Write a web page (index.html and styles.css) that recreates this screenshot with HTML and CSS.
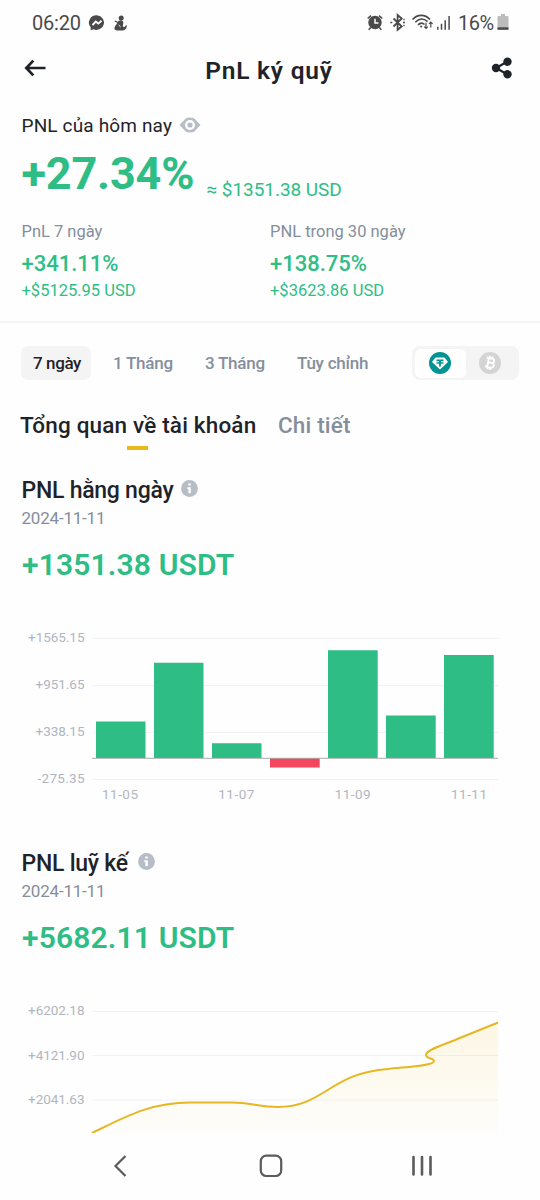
FILE: index.html
```html
<!DOCTYPE html>
<html lang="vi">
<head>
<meta charset="utf-8">
<title>PnL ký quỹ</title>
<link rel="stylesheet" href="styles.css">
</head>
<body>
<div class="status">
  <span class="clock">06:20</span>
  <svg class="st-left" width="40" height="20" viewBox="0 0 40 20">
    <path d="M8.700 2.300a7.600 7.300 0 1 1-3.300 14l-2.800.9.100-2.900a7.600 7.300 0 0 1 6-12z" fill="#4a4a4a"/>
    <path d="M4.500 12.200 7.700 8.600l2.600 2L13.500 7.800" fill="none" stroke="#fff" stroke-width="1.900"/>
    <circle cx="33.200" cy="4.900" r="2.500" fill="#4a4a4a"/>
    <path d="M30 8.500c2-2 5-1.500 5.300.8.200 2-.8 2.900-.2 4.200.600 1 2.100.5 2.500-1l1.200-.3c.2 3.700-2 5.200-4.800 5.200h-4.600c-3 0-3.800-1.800-2.200-3.900z" fill="#4a4a4a"/>
    <path d="m26.800 8 3.200 1.500M27 13.500h4.500" stroke="#4a4a4a" stroke-width="1.300"/>
    <path d="m30.700 12 1.900 1.900" stroke="#fff" stroke-width="1"/>
  </svg>
  <svg class="st-right" width="90" height="20" viewBox="0 0 90 20" fill="none" stroke="#4a4a4a">
    <circle cx="9" cy="9.500" r="6.700" fill="#4a4a4a" stroke="none"/>
    <path d="M1.700 5.500 5 2.700M16.300 5.500 13 2.700M4.700 14.500l-2 2.200M13.300 14.500l2 2.200" stroke-width="1.600"/>
    <path d="M9 5.800v4.200h3.500" stroke="#fff" stroke-width="1.500"/>
    <path d="m27.500 5.500 8.200 8-4.100 3.300V2l4.100 3.500-8.200 8" stroke-width="1.800"/>
    <path d="M24.300 9.500h2M37 9.500h2M37.500 6.800l1-.6M37.500 12.200l1 .6" stroke-width="1.500"/>
    <path d="M46.500 6.500c5-5.500 12.500-5.500 17.500 0M49.300 9.200c4-4 8.500-4 12.300-.5M52 11.900c2.200-2.200 4.600-2.200 6.500-.4" stroke-width="1.600"/>
    <circle cx="55.200" cy="13.500" r="1.100" fill="#4a4a4a" stroke="none"/>
    <path d="M60 9.800v5.500m-1.800-1.600 1.800 1.800 1.800-1.800M64.800 14.500V9.200M63 10.900l1.800-1.800 1.800 1.800" stroke-width="1.200"/>
    <path d="M71.800 13.800v3M75.500 10.800v6M79.200 7.300v9.500M83.100 3v13.800" stroke-width="1.500"/>
  </svg>
  <span class="battery-text">16%</span>
  <svg class="battery" width="12" height="18" viewBox="0 0 12 18">
    <path d="M4 1h4v2h2.500q1 0 1 1v12.500H.5V4q0-1 1-1H4z" fill="#bcbcbc"/>
    <path d="M.5 14.300h11v2.500H.5z" fill="#4a4a4a"/>
  </svg>
</div>

<header class="header">
  <svg class="back" width="24" height="20" viewBox="0 0 24 20" fill="none" stroke="#1e2329" stroke-width="2.700"><path d="M22.500 10H4M10.300 2.600 3.300 10l7 7.400"/></svg>
  <h1>PnL ký quỹ</h1>
  <svg class="share" width="22" height="22" viewBox="0 0 22 22" fill="#1e2329"><path d="M16.500 4.500 5 11l11.500 6.500" fill="none" stroke="#1e2329" stroke-width="2.200"/><circle cx="5" cy="11" r="4.200"/><circle cx="16.500" cy="4.700" r="4.200"/><circle cx="16.500" cy="17.300" r="4.200"/></svg>
</header>

<section class="summary">
  <div class="today">
    <span class="today-label">PNL của hôm nay</span>
    <svg class="eye" width="22" height="16" viewBox="0 0 22 16"><path d="M.5 8 6.500 1.700Q8 .4 11 .4T15.500 1.700L21.500 8l-6 6.300Q14 15.600 11 15.600T6.500 14.300z" fill="#b7bdc6"/><circle cx="11" cy="8" r="5" fill="#fff"/><circle cx="11" cy="8" r="2.600" fill="#b7bdc6"/></svg>
  </div>
  <div class="main-value"><span class="percent">+27.34%</span><span class="approx">≈ $1351.38 USD</span></div>
  <div class="stats">
    <div><div class="stat-label l7">PnL 7 ngày</div><div class="stat-value">+341.11%</div><div class="stat-usd">+$5125.95 USD</div></div>
    <div><div class="stat-label l30">PNL trong 30 ngày</div><div class="stat-value">+138.75%</div><div class="stat-usd">+$3623.86 USD</div></div>
  </div>
</section>

<nav class="ranges">
  <span class="range active">7 ngày</span>
  <span class="range r1">1 Tháng</span>
  <span class="range r3">3 Tháng</span>
  <span class="range custom">Tùy chỉnh</span>
  <div class="coins">
    <span class="coin on"><svg width="22" height="22" viewBox="0 0 22 22"><circle cx="11" cy="11" r="11" fill="#009393"/><path d="M6.500 5.500h9L19 10l-8 7.500L3 10z" fill="#fff"/><path d="M7.500 7.500h7v1.700h-2.600v1c2 .1 3.300.4 3.300.8s-1.300.8-3.300.8v2.600h-1.800v-2.600c-2-.1-3.300-.4-3.300-.8s1.300-.7 3.300-.8v-1H7.500z" fill="#009393"/></svg></span>
    <span class="coin"><svg width="22" height="22" viewBox="0 0 22 22"><circle cx="11" cy="11" r="11" fill="#d4d4d4"/><g transform="rotate(12 11 11)" fill="none" stroke="#fff" stroke-width="1.900"><path d="M6.800 6.300h5.400c3.200 0 3.200 4.300 0 4.300H8.900h3.700c3.500 0 3.500 4.800 0 4.800H6.800M9 6.300v9.100M9.800 4v2.300M12.400 4v2.300M9.800 15.400v2.300M12.400 15.400v2.300"/></g></svg></span>
  </div>
</nav>

<nav class="tabs"><span class="tab selected">Tổng quan về tài khoản</span><span class="tab detail">Chi tiết</span></nav>

<section class="panel">
  <div class="panel-title"><h2 class="daily">PNL hằng ngày</h2><svg width="17" height="17" viewBox="0 0 17 17"><circle cx="8.500" cy="8.500" r="8.400" fill="#b7bdc6"/><path d="M7.200 3.400h2.600v2.200H7.200zM6.300 7.200h3.500v6H7.400V9H6.300z" fill="#fff"/></svg></div>
  <div class="date">2024-11-11</div>
  <div class="amount">+1351.38 USDT</div>
  <svg class="chart" width="540" height="190" viewBox="0 620 540 190">
    <path class="grid" d="M92 638.500h406M92 685.500h406M92 732.500h406M92 779.500h406"/>
    <g fill="#2ebd85"><path d="M96 721.400h49.500V758H96zM154 662.700h49.500V758H154zM212 743.300h49.500V758H212zM328 650.300h49.700V758H328zM386 715.500h49.700V758H386zM444 655h49.700V758H444z"/></g>
    <path d="M270 758h49.700v9.500H270z" fill="#f6465d"/>
    <path d="M92 758.300h406" stroke="#a9aaab"/>
    <g class="axis end"><text x="84.500" y="642.300" textLength="56.500">+1565.15</text><text x="84.500" y="689.300" textLength="49">+951.65</text><text x="84.500" y="736.300" textLength="49">+338.15</text><text x="84.500" y="783.300" textLength="47">-275.35</text></g>
    <g class="axis mid"><text x="120" y="799" textLength="36">11-05</text><text x="236.300" y="799" textLength="36">11-07</text><text x="352.700" y="799" textLength="36">11-09</text><text x="469" y="799" textLength="36">11-11</text></g>
  </svg>
</section>

<section class="panel last">
  <div class="panel-title"><h2 class="total">PNL luỹ kế</h2><svg width="17" height="17" viewBox="0 0 17 17"><circle cx="8.500" cy="8.500" r="8.400" fill="#b7bdc6"/><path d="M7.200 3.400h2.600v2.200H7.200zM6.300 7.200h3.500v6H7.400V9H6.300z" fill="#fff"/></svg></div>
  <div class="date">2024-11-11</div>
  <div class="amount">+5682.11 USDT</div>
  <svg class="chart" width="540" height="140" viewBox="0 993 540 140">
    <defs><linearGradient id="fade" x1="0" y1="1023" x2="0" y2="1138" gradientUnits="userSpaceOnUse"><stop offset="0" stop-color="#f0b90b" stop-opacity=".11"/><stop offset="1" stop-color="#f0b90b" stop-opacity=".01"/></linearGradient></defs>
    <path class="grid" d="M92 1011.500h406M92 1055.500h406M92 1100h406"/>
    <path d="M92 1133C125 1117 150 1102.500 190 1102.500H232C250 1102.500 260 1107 278 1107C324 1107 330 1073 388 1069C404 1067 434 1066 434 1061C434 1058 426 1059 426 1055C426 1050 440 1046 455 1040C469 1034 485 1028 498 1022.500V1133z" fill="url(#fade)"/>
    <path d="M92 1133C125 1117 150 1102.500 190 1102.500H232C250 1102.500 260 1107 278 1107C324 1107 330 1073 388 1069C404 1067 434 1066 434 1061C434 1058 426 1059 426 1055C426 1050 440 1046 455 1040C469 1034 485 1028 498 1022.500" fill="none" stroke="#e6b722" stroke-width="2"/>
    <g class="axis end"><text x="84.500" y="1015.300" textLength="56.500">+6202.18</text><text x="84.500" y="1060" textLength="56.500">+4121.90</text><text x="84.500" y="1104" textLength="56.500">+2041.63</text></g>
  </svg>
</section>

<footer class="navbar">
  <svg width="14" height="24" viewBox="0 0 14 24" fill="none" stroke="#5b5b5b" stroke-width="2.200"><path d="M12.500 2 2.500 12l10 10"/></svg>
  <svg class="home" width="24" height="24" viewBox="0 0 24 24" fill="none" stroke="#5b5b5b" stroke-width="2.200"><rect x="1.800" y="1.600" width="20.400" height="20.400" rx="5.500"/></svg>
  <svg width="22" height="24" viewBox="0 0 22 24" fill="none" stroke="#5b5b5b" stroke-width="2.600" stroke-linecap="round"><path d="M2.500 3v17.500M11 3v17.500M19.500 3v17.500"/></svg>
</footer>
</body>
</html>
```
FILE: styles.css
```css
* { box-sizing: border-box; }
body {
  margin: 0;
  width: 540px;
  height: 1200px;
  overflow: hidden;
  background: #fefefe;
  color: #1e2329;
  font-family: Roboto, "Noto Sans", sans-serif;
  white-space: nowrap;
}
svg { display: block; flex: none; }
h1, h2 { margin: 0; }

.status { display: flex; align-items: center; height: 45px; padding-left: 32px; color: #4a4a4a; font-size: 20px; }
.clock { width: 56px; letter-spacing: -.2px; }
.st-right { margin-left: 238px; }
.battery-text { width: 38.500px; margin-left: 2px; letter-spacing: -.5px; }
.battery { margin-top: -2px; }

.header { display: flex; justify-content: space-between; align-items: center; height: 51px; padding: 0 27px 0 23px; }
.header h1 { font-size: 24.500px; line-height: 30px; font-weight: 600; letter-spacing: .8px; }
.back, .share { margin-bottom: 5px; }

.summary { height: 227px; padding: 17px 21.500px 0; border-bottom: 2px solid #f4f5f6; }
.today { display: flex; align-items: center; gap: 7px; height: 25px; }
.today-label { font-size: 19px; width: 150px; letter-spacing: .15px; }
.eye { margin-bottom: 2px; }
.main-value { display: flex; height: 52px; margin-top: 10px; color: #2ebd85; }
.percent { width: 185px; font-size: 45px; line-height: 52px; font-weight: 700; letter-spacing: -.2px; }
.approx { margin-top: 29.500px; height: 24px; font-size: 19px; line-height: 24px; letter-spacing: -.05px; }
.stats { display: grid; grid-template-columns: 248.500px 1fr; margin-top: 20px; }
.stat-label { height: 24px; color: #848e9c; font-size: 16.500px; line-height: 24px; }
.stat-value { height: 30px; margin-top: 5px; color: #2ebd85; font-size: 22px; line-height: 30px; font-weight: 500; }
.stat-usd { height: 24px; color: #2ebd85; font-size: 16.500px; line-height: 24px; }

.ranges { display: flex; height: 34px; margin: 23px 21px 0; }
.range { width: 92px; color: #848e9c; font-size: 17px; line-height: 34px; font-weight: 500; letter-spacing: -.25px; }
.range.active { width: 70px; margin-right: 22px; padding-left: 12px; border-radius: 7px; background: #f4f4f4; color: #1e2329; letter-spacing: -.4px; }
.range.custom { width: 115px; }
.coins { display: flex; width: 107px; padding: 2.500px; border-radius: 8px; background: #f4f4f4; }
.coin { display: flex; align-items: center; justify-content: center; width: 49px; height: 29px; }
.coin.on { width: 51px; border-radius: 6px; background: #fff; }

.tabs { display: flex; height: 40px; margin: 30px 20px 0; }
.tab { position: relative; height: 40px; color: #848e9c; font-size: 22.500px; line-height: 30px; font-weight: 500; letter-spacing: .17px; }
.tab.selected { width: 236px; margin-right: 22px; color: #1e2329; }
.tab.selected::after { content: ""; position: absolute; left: 107px; bottom: 0; width: 21px; height: 4px; background: #e9b91c; }

.panel { height: 373px; padding-top: 26px; margin: 0; }
.panel.last { height: 310px; }
.panel-title { display: flex; align-items: center; gap: 8px; height: 28px; padding-left: 21.500px; }
.panel-title svg { margin-bottom: 3px; }
.panel-title h2 { padding-top: 2px; font-size: 23px; line-height: 28px; font-weight: 500; letter-spacing: -.25px; }
.daily { width: 151.500px; }
.total { width: 108px; }
.date { height: 24px; margin-top: 2px; padding-left: 21.500px; color: #848e9c; font-size: 17px; line-height: 24px; letter-spacing: -.2px; }
.amount { height: 38px; margin-top: 16px; padding-left: 22px; color: #2ebd85; font-size: 30px; line-height: 38px; font-weight: 600; letter-spacing: .15px; }
.chart { margin-top: 36px; }
.grid { stroke: #f1f2f3; }
.axis { fill: #b0b6c1; font-size: 13.500px; }
.end { text-anchor: end; }
.mid { text-anchor: middle; }

.navbar { display: flex; justify-content: space-between; padding: 21px 107px 0 113px; height: 67px; }
.home { margin-left: 4px; }
```
